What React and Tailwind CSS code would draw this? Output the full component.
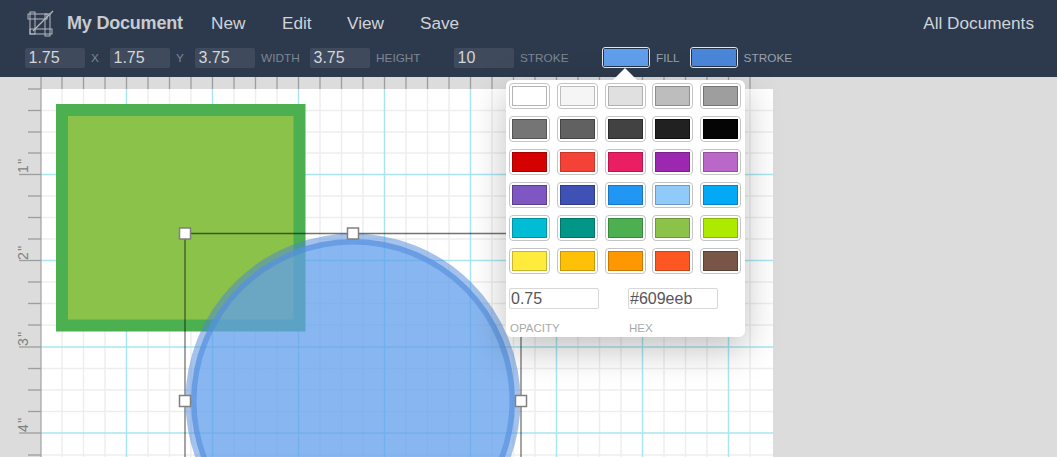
const font = { fontFamily: '"Liberation Sans", Arial, sans-serif' };

const minorX = [62, 83.5, 105, 148, 169.5, 191, 234, 255.5, 277, 320, 341.5, 363, 406, 427.5, 449, 492, 513.5, 535, 578, 599.5, 621, 664, 685.5, 707, 750];
const majorX = [126.5, 212.5, 298.5, 384.5, 470.5, 556.5, 642.5, 728.5];
const minorY = [89, 110.5, 132, 153, 196, 217.5, 239, 282, 303.5, 325, 368.5, 390, 411.5, 455];
const majorY = [174.5, 260.5, 347, 433];

const fields = [
  { value: "1.75", label: "X", w: "w-[25px]" },
  { value: "1.75", label: "Y", w: "w-[25px]" },
  { value: "3.75", label: "WIDTH", w: "w-[55px]" },
  { value: "3.75", label: "HEIGHT", w: "w-[84px]" },
  { value: "10", label: "STROKE", w: "w-[88px]" },
];

const swatches = [
  ["#ffffff", "#b5b5b5"], ["#f5f5f5", "#bdbdbd"], ["#e0e0e0", "#b0b0b0"], ["#bdbdbd", "#8e8e8e"], ["#9e9e9e", "#757575"],
  ["#757575", "#555555"], ["#616161", "#444444"], ["#424242", "#2c2c2c"], ["#212121", "#111111"], ["#050505", "#000000"],
  ["#d50000", "#a80000"], ["#f44336", "#c8352a"], ["#e91e63", "#b8174e"], ["#9c27b0", "#7b1f8b"], ["#ba68c8", "#93529e"],
  ["#7e57c2", "#5c3f8f"], ["#3f51b5", "#2f3d88"], ["#2196f3", "#1a76c0"], ["#90caf9", "#6f9cc2"], ["#03a9f4", "#0285c0"],
  ["#00bcd4", "#0094a7"], ["#009688", "#00756a"], ["#4caf50", "#3a873e"], ["#8bc34a", "#6d993a"], ["#aeea00", "#88b800"],
  ["#ffeb3b", "#c9b82e"], ["#ffc107", "#c99805"], ["#ff9800", "#c97800"], ["#ff5722", "#c9441b"], ["#795548", "#5b4036"],
];

const CropIcon = () => (
  <svg width="27" height="27" viewBox="0 0 27 27" fill="none" stroke="#b4b8be" strokeWidth="1" className="shrink-0">
    <rect x="1" y="4" width="19" height="5" />
    <rect x="3" y="2" width="5" height="22" />
    <rect x="3" y="19" width="22" height="5" />
    <rect x="18" y="4" width="5" height="22" />
    <path d="M6 21L26 1" strokeWidth="1.300" />
  </svg>
);

const Field = ({ value, label, w }) => (
  <div className="flex items-center">
    <div className="w-[60px] h-[20px] bg-[#3f4b5d] rounded-[2px] pl-[3.500px] text-[16px] leading-[20px] text-[#d3d6da]">{value}</div>
    <div className={`${w} pl-[6px] text-[11.800px] leading-none text-[#7d8693] whitespace-nowrap pt-[3px]`}>{label}</div>
  </div>
);

const ColorWell = ({ color, label }) => (
  <div className="flex items-center">
    <div className="w-[48px] h-[21px] rounded-[3px] border-[1.500px] border-[#e4e6e9] bg-[#26344a] p-px">
      <div className="w-full h-full" style={{ background: color }} />
    </div>
    <div className="pl-[6px] text-[11.800px] pt-[2px] text-[#9aa2ad]">{label}</div>
  </div>
);

const Handle = ({ x, y }) => (
  <rect x={x - 5.5} y={y - 5.5} width="11" height="11" fill="#fff" stroke="#808080" strokeWidth="1.500" />
);

const Drawing = () => (
  <svg width="1057" height="380" viewBox="0 77 1057 380" className="block">
    {/* horizontal ruler ticks */}
    {[41, ...minorX, ...majorX].map((x) => (
      <line key={x} x1={x} x2={x} y1="77" y2="89" stroke="#9d9d9d" strokeWidth="1.300" />
    ))}
    <rect x="41" y="89" width="732" height="368" fill="#fff" />
    {minorX.map((x) => <line key={x} x1={x} x2={x} y1="89" y2="457" stroke="#eeeeee" strokeWidth="1.500" />)}
    {minorY.slice(1).map((y) => <line key={y} x1="41" x2="773" y1={y} y2={y} stroke="#eeeeee" strokeWidth="1.500" />)}
    {majorX.map((x) => <line key={x} x1={x} x2={x} y1="89" y2="457" stroke="#a9e5f1" strokeWidth="1.500" />)}
    {majorY.map((y) => <line key={y} x1="41" x2="773" y1={y} y2={y} stroke="#a9e5f1" strokeWidth="1.500" />)}

    {/* vertical ruler */}
    <line x1="41" x2="41" y1="89" y2="457" stroke="#a8a8a8" strokeWidth="1.300" />
    {minorY.map((y) => <line key={y} x1="28" x2="41" y1={y} y2={y} stroke="#9d9d9d" strokeWidth="1.300" />)}
    {majorY.map((y) => <line key={y} x1="19" x2="41" y1={y} y2={y} stroke="#9d9d9d" strokeWidth="1.300" />)}
    {[['1"', 174], ['2"', 261], ['3"', 347], ['4"', 433]].map(([t, y]) => (
      <text key={t} transform={`translate(28 ${y - 1}) rotate(-90)`} fontSize="14" letterSpacing="1.500" fill="#7f7f7f" style={font}>{t}</text>
    ))}

    {/* shapes */}
    <rect x="62" y="110" width="237.500" height="215.500" fill="#8bc34a" stroke="#4caf50" strokeWidth="12" />
    <circle cx="353" cy="401" r="162" fill="#609eeb" fillOpacity="0.75" stroke="#4a86d8" strokeOpacity="0.5" strokeWidth="11" />

    {/* selection */}
    <path d="M185 457V233.500H521V457" fill="none" stroke="#000" strokeOpacity="0.55" strokeWidth="1.300" />
    <Handle x={185} y={233.500} />
    <Handle x={353} y={233.500} />
    <Handle x={185} y={401} />
    <Handle x={521} y={401} />
  </svg>
);

const Popover = () => (
  <div className="absolute left-[506px] top-[3px] w-[239px] h-[257px] bg-white rounded-[6px] shadow-[0_12px_36px_rgba(0,0,0,0.25)] pl-[3px] pt-[2.500px]">
    <div className="absolute left-[107px] -top-[12px] w-0 h-0 border-x-[12px] border-x-transparent border-b-[12px] border-b-white" />
    <div className="grid grid-cols-[repeat(5,41px)] gap-x-[6.800px] gap-y-[7px]">
      {swatches.map(([bg, edge]) => (
        <div key={bg} className="h-[26px] rounded-[4px] border-[1.500px] border-[#c4c4c4] p-[2px] bg-white">
          <div className="w-full h-full border" style={{ background: bg, borderColor: edge }} />
        </div>
      ))}
    </div>
    <div className="flex mt-[14.500px]">
      <div className="w-[119px]">
        <div className="w-[90px] h-[21px] border border-[#d8d8d8] rounded-[2px] pl-[1px] text-[16px] leading-[20px] text-[#55565c]">0.75</div>
        <div className="mt-[12px] pl-[1px] text-[11.500px] leading-[14px] text-[#a9a9a9]">OPACITY</div>
      </div>
      <div>
        <div className="w-[90px] h-[21px] border border-[#d8d8d8] rounded-[2px] pl-[1px] text-[16px] leading-[20px] text-[#55565c]">#609eeb</div>
        <div className="mt-[12px] pl-[1px] text-[11.500px] leading-[14px] text-[#a9a9a9]">HEX</div>
      </div>
    </div>
  </div>
);

export default function App() {
  return (
    <div className="w-[1057px] h-[457px] overflow-hidden flex flex-col bg-[#dcdcdc]" style={font}>
      <header className="h-[77px] shrink-0 bg-[#2d3a4d]">
        <div className="flex items-center h-[47px] pl-[27px] pr-[23px]">
          <CropIcon />
          <div className="ml-[13px] w-[144px] text-[18px] font-bold text-[#c8cbcf] tracking-[-0.2px]">My Document</div>
          <nav className="flex text-[17.200px] text-[#d0d3d7] pt-[1px]">
            <span className="w-[71px]">New</span>
            <span className="w-[65px]">Edit</span>
            <span className="w-[73px]">View</span>
            <span>Save</span>
          </nav>
          <div className="ml-auto text-[17.200px] text-[#d0d3d7]">All Documents</div>
        </div>
        <div className="flex items-center h-[21px] pl-[25px]">
          {fields.map((f, i) => <Field key={i} {...f} />)}
          <ColorWell color="#609eeb" label="FILL" />
          <div className="w-[10px]" />
          <ColorWell color="#4a86d8" label="STROKE" />
        </div>
      </header>
      <main className="relative flex-1">
        <Drawing />
        <Popover />
      </main>
    </div>
  );
}
